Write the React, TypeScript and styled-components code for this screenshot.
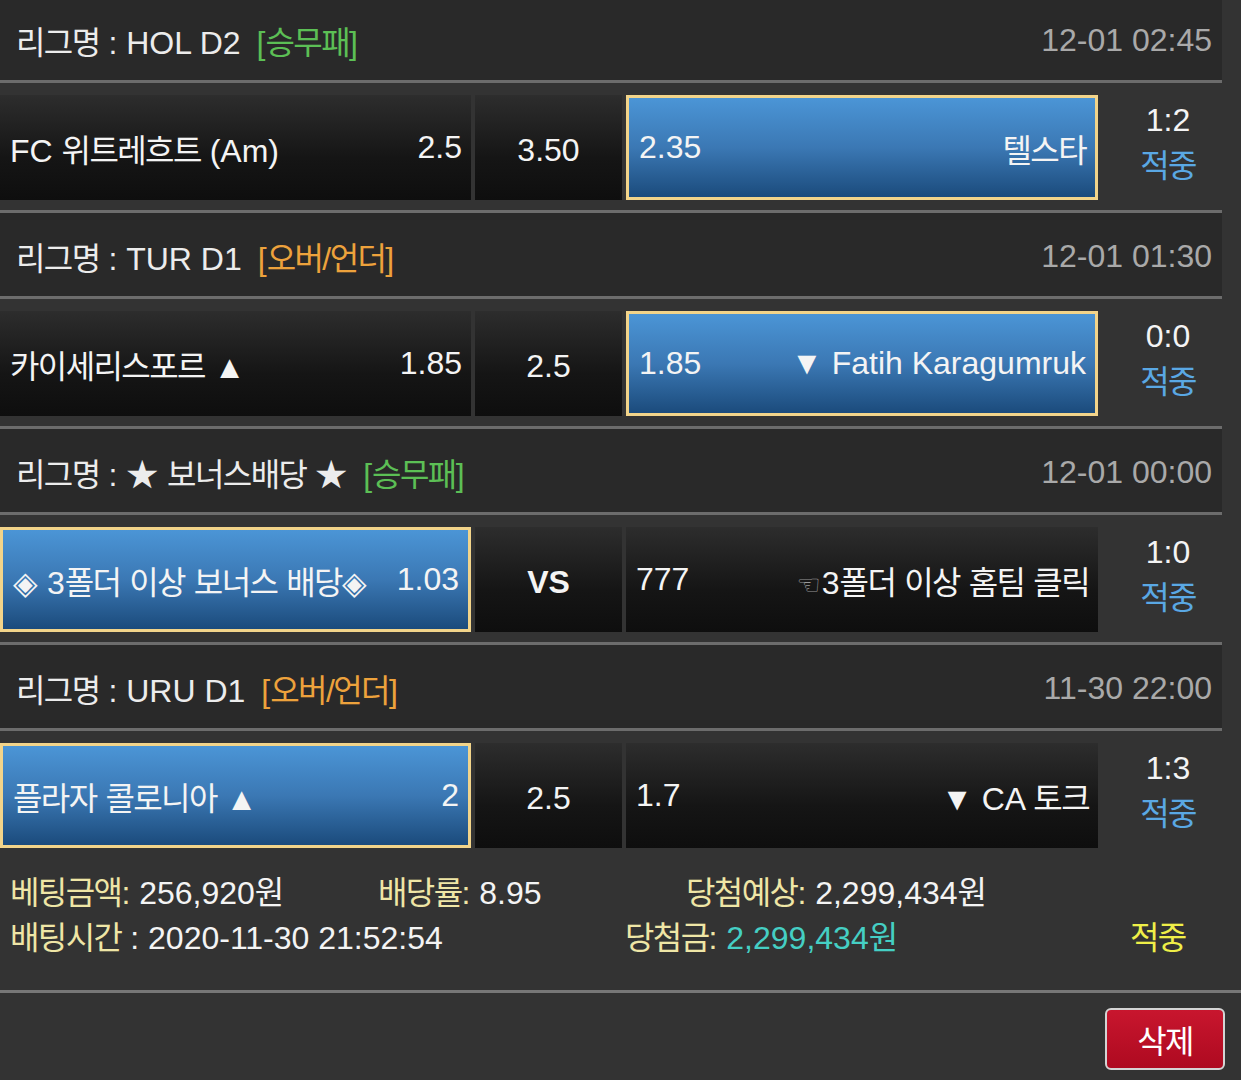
import React from "react";
import styled, { createGlobalStyle } from "styled-components";

const GlobalStyle = createGlobalStyle`
  html, body {
    margin: 0;
    padding: 0;
    background: #333333;
  }
  body {
    font-family: "Liberation Sans", "Noto Sans CJK KR", Arial, sans-serif;
    font-size: 32px;
    color: #f2f2f2;
  }
`;

type Pick = "home" | "away";

interface IMatch {
  league: React.ReactNode;
  market: "wdl" | "ou";
  time: string;
  home: { name: React.ReactNode; odds: string };
  mid: string;
  midBold?: boolean;
  away: { name: React.ReactNode; odds: string };
  pick: Pick;
  score: string;
}

// korean glyphs from Noto are wider than the phone font, squeeze them a bit
const K = styled.span`
  letter-spacing: -0.05em;
`;

const Hand = styled.span`
  font-family: "DejaVu Sans", sans-serif;
  font-size: 27px;
  color: #9a9a9a;
  margin-right: 1px;
`;

const MATCHES: IMatch[] = [
  {
    league: "HOL D2",
    market: "wdl",
    time: "12-01 02:45",
    home: { name: <>FC <K>위트레흐트</K> (Am)</>, odds: "2.5" },
    mid: "3.50",
    away: { name: <K>텔스타</K>, odds: "2.35" },
    pick: "away",
    score: "1:2",
  },
  {
    league: "TUR D1",
    market: "ou",
    time: "12-01 01:30",
    home: { name: <><K>카이세리스포르</K> ▲</>, odds: "1.85" },
    mid: "2.5",
    away: { name: "▼ Fatih Karagumruk", odds: "1.85" },
    pick: "away",
    score: "0:0",
  },
  {
    league: <>★ <K>보너스배당</K> ★</>,
    market: "wdl",
    time: "12-01 00:00",
    home: { name: <>◈ 3<K>폴더</K> <K>이상</K> <K>보너스</K> <K>배당</K>◈</>, odds: "1.03" },
    mid: "VS",
    midBold: true,
    away: {
      name: <><Hand>☜</Hand>3<K>폴더</K> <K>이상</K> <K>홈팀</K> <K>클릭</K></>,
      odds: "777",
    },
    pick: "home",
    score: "1:0",
  },
  {
    league: "URU D1",
    market: "ou",
    time: "11-30 22:00",
    home: { name: <><K>플라자</K> <K>콜로니아</K> ▲</>, odds: "2" },
    mid: "2.5",
    away: { name: <>▼ CA <K>토크</K></>, odds: "1.7" },
    pick: "home",
    score: "1:3",
  },
];

export default function App() {
  return (
    <Page>
      <GlobalStyle />
      <List>
        {MATCHES.map((m, index) => (
          <Block key={index}>
            <LeagueHeader>
              <LeagueName>
                <K>리그명</K> : {m.league}
                <MarketTag $market={m.market}>
                  [<K>{m.market === "wdl" ? "승무패" : "오버/언더"}</K>]
                </MarketTag>
              </LeagueName>
              <KickOff>{m.time}</KickOff>
            </LeagueHeader>
            <BetRow>
              <OddsCell $selected={m.pick === "home"}>
                <span>{m.home.name}</span>
                <span>{m.home.odds}</span>
              </OddsCell>
              <MidCell $bold={m.midBold}>{m.mid}</MidCell>
              <OddsCell $selected={m.pick === "away"}>
                <span>{m.away.odds}</span>
                <span>{m.away.name}</span>
              </OddsCell>
              <Result>
                <span>{m.score}</span>
                <Hit>
                  <K>적중</K>
                </Hit>
              </Result>
            </BetRow>
          </Block>
        ))}
      </List>

      <Summary>
        <SummaryLine $cols="368px 308px 1fr">
          <span>
            <Label><K>베팅금액</K>:</Label> 256,920<K>원</K>
          </span>
          <span>
            <Label><K>배당률</K>:</Label> 8.95
          </span>
          <span>
            <Label><K>당첨예상</K>:</Label> 2,299,434<K>원</K>
          </span>
        </SummaryLine>
        <SummaryLine $cols="615px 505px 1fr">
          <span>
            <Label><K>배팅시간</K></Label> : 2020-11-30 21:52:54
          </span>
          <span>
            <Label><K>당첨금</K>:</Label> <Prize>2,299,434<K>원</K></Prize>
          </span>
          <Status>
            <K>적중</K>
          </Status>
        </SummaryLine>
      </Summary>

      <Actions>
        <DeleteButton type="button">
          <K>삭제</K>
        </DeleteButton>
      </Actions>
    </Page>
  );
}

const Page = styled.div({
  width: 1241,
  minHeight: 1080,
  background: "#333333",
  overflow: "hidden",
});

const List = styled.div({
  width: 1222,
  marginTop: -3,
});

const Block = styled.div({
  "&:not(:last-child)": {
    borderBottom: "3px solid #6c6c6c",
  },
});

const LeagueHeader = styled.div({
  height: 86,
  boxSizing: "border-box",
  display: "flex",
  alignItems: "center",
  justifyContent: "space-between",
  padding: "3px 10px 0 16px",
  background: "#292929",
  borderBottom: "3px solid #6c6c6c",
});

const LeagueName = styled.div({
  color: "#ececec",
  whiteSpace: "nowrap",
});

const MarketTag = styled.span<{ $market: "wdl" | "ou" }>((p) => ({
  marginLeft: 16,
  color: p.$market === "wdl" ? "#5cbf55" : "#eda23c",
}));

const KickOff = styled.div({
  color: "#a9a9a9",
});

const BetRow = styled.div({
  height: 127,
  boxSizing: "border-box",
  display: "grid",
  gridTemplateColumns: "471px 147px 472px 1fr",
  columnGap: 4,
  padding: "12px 0 10px",
  background: "#333333",
});

const OddsCell = styled.div<{ $selected?: boolean }>((p) => ({
  display: "flex",
  alignItems: "center",
  justifyContent: "space-between",
  boxSizing: "border-box",
  padding: "0 9px 0 10px",
  whiteSpace: "nowrap",
  color: "#f4f4f4",
  background: p.$selected
    ? "linear-gradient(#4b95d6, #3b78b4 50%, #1b4b7c)"
    : "linear-gradient(#2d2d2d, #151515 60%, #0e0e0e)",
  border: p.$selected ? "3px solid #f2d48a" : "none",
}));

const MidCell = styled.div<{ $bold?: boolean }>((p) => ({
  display: "flex",
  alignItems: "center",
  justifyContent: "center",
  paddingTop: 6,
  fontWeight: p.$bold ? 700 : 400,
  color: "#f4f4f4",
  background: "linear-gradient(#2d2d2d, #151515 60%, #0e0e0e)",
}));

const Result = styled.div({
  display: "flex",
  flexDirection: "column",
  alignItems: "center",
  justifyContent: "center",
  paddingLeft: 12,
  paddingBottom: 10,
  lineHeight: "46px",
  color: "#f4f4f4",
});

const Hit = styled.span({
  color: "#5aa8e4",
});

const Summary = styled.div({
  padding: "13px 10px 29px",
  borderBottom: "3px solid #777777",
  lineHeight: "45px",
  color: "#f4f4f4",
});

const SummaryLine = styled.div<{ $cols: string }>((p) => ({
  display: "grid",
  gridTemplateColumns: p.$cols,
  whiteSpace: "nowrap",
}));

const Label = styled.span({
  color: "#efe6a6",
});

const Prize = styled.span({
  color: "#45cfc4",
});

const Status = styled.span({
  color: "#efef48",
});

const Actions = styled.div({
  display: "flex",
  justifyContent: "flex-end",
  padding: "15px 16px 0 0",
});

const DeleteButton = styled.button({
  width: 120,
  height: 62,
  boxSizing: "border-box",
  border: "2px solid #d4d4d4",
  borderRadius: 6,
  background: "linear-gradient(#c8162e, #ae0a20)",
  color: "#ffffff",
  fontFamily: "inherit",
  fontSize: 32,
  cursor: "pointer",
});
